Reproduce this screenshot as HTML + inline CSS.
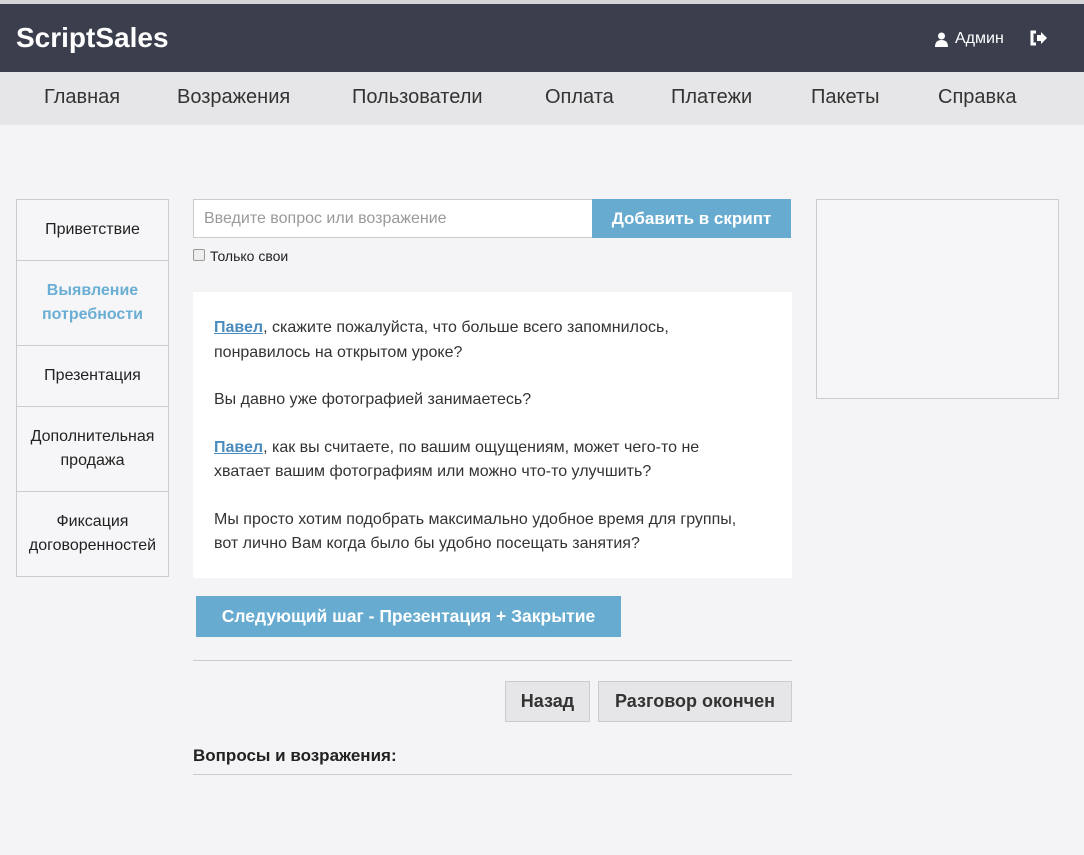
<!DOCTYPE html>
<html><head><meta charset="utf-8"><style>
*{margin:0;padding:0;box-sizing:border-box}
body{width:1084px;height:855px;background:#f4f4f6;font-family:"Liberation Sans",sans-serif;color:#222;position:relative;overflow:hidden}
.a{position:absolute}
.top{left:0;top:0;width:1084px;height:4px;background:#d6d6d8}
.hdr{left:0;top:4px;width:1084px;height:68px;background:#3b3f4d;color:#fff}
.nav{left:0;top:72px;width:1084px;height:53px;background:#e6e6e8}
.nav span{position:absolute;top:14px;font-size:20px;color:#333}
.side{left:16px;top:199px;width:153px;border:1px solid #ccc;background:#f6f6f8}
.side div{border-bottom:1px solid #ccc;display:flex;align-items:center;justify-content:center;text-align:center;font-size:16px;line-height:24px}
.side div:last-child{border-bottom:none}
.card p{font-size:16px;line-height:24.5px;color:#333;margin-bottom:23px;white-space:nowrap}
.card a{color:#4a8cbe;font-weight:bold;text-decoration:underline}
.btn{background:#e6e6e8;border:1px solid #ccc;font-weight:bold;color:#333;font-size:18px;display:flex;align-items:center;justify-content:center}
</style></head><body>
<div class="a top"></div>
<div class="a hdr">
<div class="a" style="left:16px;top:18px;font-size:28px;font-weight:bold">ScriptSales</div>
<svg class="a" style="left:935px;top:28px" width="13" height="15" viewBox="0 0 13 15"><circle cx="6.5" cy="4" r="3.5" fill="#fff"/><path d="M0 15 Q0 8 6.5 8 Q13 8 13 15Z" fill="#fff"/></svg>
<div class="a" style="left:955px;top:26px;font-size:16px">Админ</div>
<svg class="a" style="left:1029px;top:26px" width="18" height="16" viewBox="0 0 18 16"><path d="M7 2H3v12h4" stroke="#fff" stroke-width="3" fill="none"/><path d="M8 5h4V2l6 6-6 6v-3H8z" fill="#fff"/></svg>
</div>
<div class="a nav">
<span style="left:44px">Главная</span><span style="left:177px">Возражения</span><span style="left:352px">Пользователи</span><span style="left:545px">Оплата</span><span style="left:671px">Платежи</span><span style="left:811px">Пакеты</span><span style="left:938px">Справка</span>
</div>
<div class="a side">
<div style="height:61px">Приветствие</div>
<div style="height:85px;color:#6aaed3;font-weight:bold">Выявление<br>потребности</div>
<div style="height:61px">Презентация</div>
<div style="height:85px">Дополнительная<br>продажа</div>
<div style="height:84px">Фиксация<br>договоренностей</div>
</div>
<div class="a" style="left:193px;top:199px;width:400px;height:39px;background:#fff;border:1px solid #ccc;font-size:16px;color:#999;padding:10px 0 0 10px">Введите вопрос или возражение</div>
<div class="a" style="left:592px;top:199px;width:199px;height:39px;background:#67acd0;color:#fff;font-weight:bold;font-size:17px;display:flex;align-items:center;justify-content:center">Добавить в скрипт</div>
<div class="a" style="left:193px;top:249px;width:12px;height:12px;border:1px solid #999;border-radius:2px;background:#eee"></div>
<div class="a" style="left:210px;top:248px;font-size:14px">Только свои</div>
<div class="a card" style="left:193px;top:292px;width:599px;height:286px;background:#fff;padding:24px 21px">
<p><a>Павел</a>, скажите пожалуйста, что больше всего запомнилось,<br>понравилось на открытом уроке?</p>
<p>Вы давно уже фотографией занимаетесь?</p>
<p><a>Павел</a>, как вы считаете, по вашим ощущениям, может чего-то не<br>хватает вашим фотографиям или можно что-то улучшить?</p>
<p>Мы просто хотим подобрать максимально удобное время для группы,<br>вот лично Вам когда было бы удобно посещать занятия?</p>
</div>
<div class="a" style="left:196px;top:596px;width:425px;height:41px;background:#67acd0;color:#fff;font-weight:bold;font-size:17.5px;display:flex;align-items:center;justify-content:center">Следующий шаг - Презентация + Закрытие</div>
<div class="a" style="left:193px;top:660px;width:599px;height:1px;background:#ccc"></div>
<div class="a btn" style="left:505px;top:681px;width:85px;height:41px">Назад</div>
<div class="a btn" style="left:598px;top:681px;width:194px;height:41px">Разговор окончен</div>
<div class="a" style="left:193px;top:746px;font-size:17px;font-weight:bold">Вопросы и возражения:</div>
<div class="a" style="left:193px;top:774px;width:599px;height:1px;background:#ccc"></div>
<div class="a" style="left:816px;top:199px;width:243px;height:200px;border:1px solid #ccc;background:#f6f6f8"></div>
</body></html>
